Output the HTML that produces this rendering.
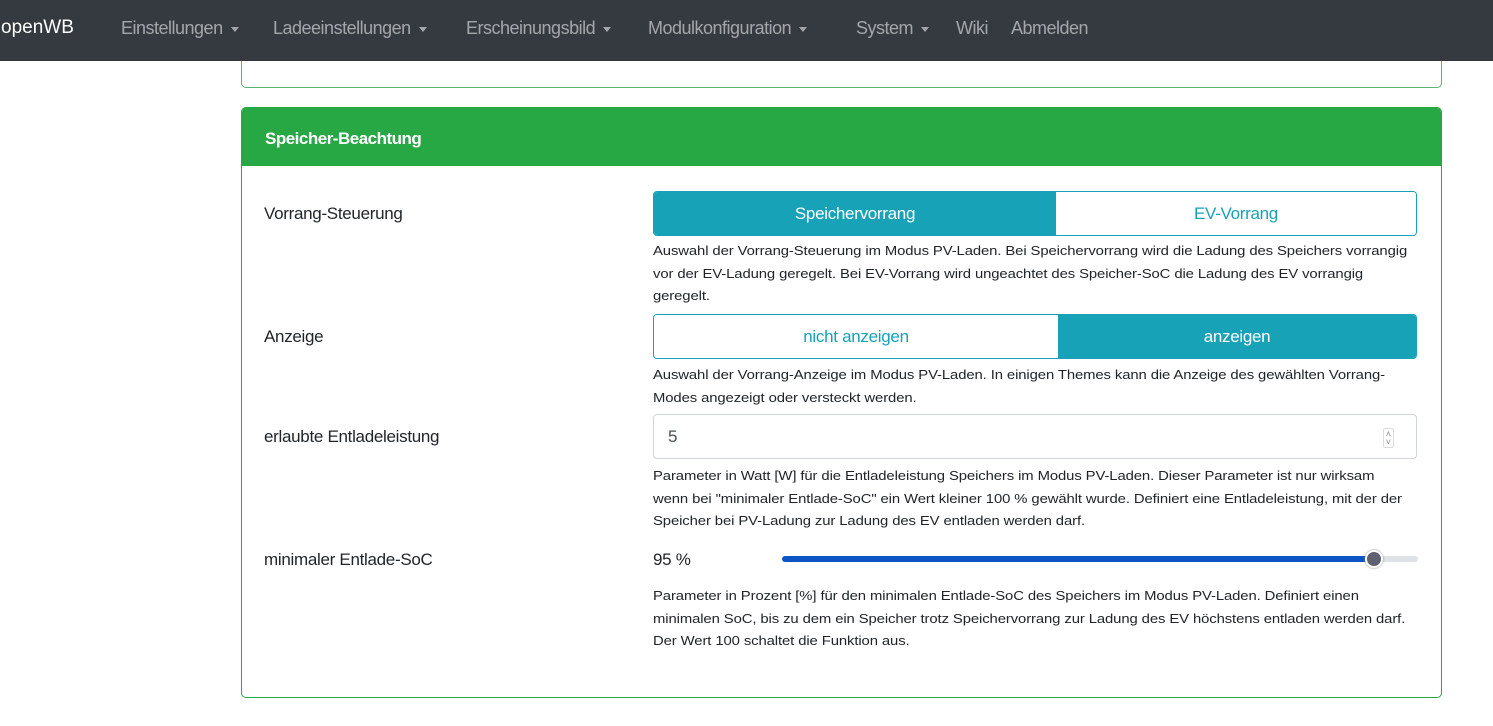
<!DOCTYPE html>
<html><head><meta charset="utf-8"><style>
*{margin:0;padding:0;box-sizing:border-box}
body{width:1493px;height:726px;background:#fff;font-family:"Liberation Sans",sans-serif;position:relative;overflow:hidden;color:#212529}
.nav{position:absolute;left:0;top:0;width:1493px;height:61px;background:#343a40;z-index:5}
.nav span{position:absolute;top:18px;font-size:18px;color:rgba(255,255,255,.55);letter-spacing:-0.5px;white-space:nowrap}
.nav .brand{color:#fff;font-size:19px;top:17px;letter-spacing:0}
.car{display:inline-block;width:0;height:0;border-left:4px solid transparent;border-right:4px solid transparent;border-top:5px solid rgba(255,255,255,.55);vertical-align:middle;margin-left:8px}
.card0{position:absolute;left:241px;top:40px;width:1201px;height:48px;border:1px solid #5cb270;border-top:none;border-radius:0 0 5px 5px}
.card{position:absolute;left:241px;top:107px;width:1201px;height:591px;border:1px solid #28a745;border-radius:5px;overflow:hidden}
.hdr{height:58px;background:#28a745;color:#fff;font-weight:bold;font-size:17px;padding:21px 0 0 23px;letter-spacing:-0.5px}
.lbl{position:absolute;left:264px;font-size:17px;letter-spacing:-0.3px;white-space:nowrap}
.help{position:absolute;left:653px;font-size:14.85px;line-height:25.6px;letter-spacing:-0.1px;white-space:nowrap;color:#212529;transform:scaleY(0.88);transform-origin:0 0}
.bg{position:absolute;left:653px;width:764px;height:45px;border:1px solid #17a2b8;border-radius:4px;display:flex;overflow:hidden}
.bg div{display:flex;align-items:center;justify-content:center;font-size:17px;letter-spacing:-0.3px}
.on{background:#17a2b8;color:#fff}.off{color:#17a2b8;background:#fff}
</style></head><body>
<div class="nav">
<span class="brand" style="left:1px">openWB</span>
<span style="left:121px">Einstellungen<i class="car"></i></span>
<span style="left:273px">Ladeeinstellungen<i class="car"></i></span>
<span style="left:466px">Erscheinungsbild<i class="car"></i></span>
<span style="left:648px">Modulkonfiguration<i class="car"></i></span>
<span style="left:856px">System<i class="car"></i></span>
<span style="left:956px">Wiki</span>
<span style="left:1011px">Abmelden</span>
</div>
<div class="card0"></div>
<div class="card"><div class="hdr">Speicher-Beachtung</div></div>
<div class="lbl" style="top:204px">Vorrang-Steuerung</div>
<div class="bg" style="top:191px"><div class="on" style="width:402px">Speichervorrang</div><div class="off" style="flex:1">EV-Vorrang</div></div>
<div class="help" style="top:241px">Auswahl der Vorrang-Steuerung im Modus PV-Laden. Bei Speichervorrang wird die Ladung des Speichers vorrangig<br>vor der EV-Ladung geregelt. Bei EV-Vorrang wird ungeachtet des Speicher-SoC die Ladung des EV vorrangig<br>geregelt.</div>
<div class="lbl" style="top:327px">Anzeige</div>
<div class="bg" style="top:314px"><div class="off" style="width:404px">nicht anzeigen</div><div class="on" style="flex:1">anzeigen</div></div>
<div class="help" style="top:365px">Auswahl der Vorrang-Anzeige im Modus PV-Laden. In einigen Themes kann die Anzeige des gewählten Vorrang-<br>Modes angezeigt oder versteckt werden.</div>
<div class="lbl" style="top:427px">erlaubte Entladeleistung</div>
<div style="position:absolute;left:653px;top:414px;width:764px;height:45px;border:1px solid #ced4da;border-radius:4px;font-size:17px;padding:12px 0 0 14px;color:#495057">5<span style="position:absolute;right:22px;top:13px;font-size:9px;line-height:8px;color:#888;border:1px solid #ddd;border-radius:2px;padding:1px 2px">˄<br>˅</span></div>
<div class="help" style="top:466px">Parameter in Watt [W] für die Entladeleistung Speichers im Modus PV-Laden. Dieser Parameter ist nur wirksam<br>wenn bei "minimaler Entlade-SoC" ein Wert kleiner 100 % gewählt wurde. Definiert eine Entladeleistung, mit der der<br>Speicher bei PV-Ladung zur Ladung des EV entladen werden darf.</div>
<div class="lbl" style="top:550px">minimaler Entlade-SoC</div>
<div style="position:absolute;left:653px;top:550px;font-size:17px;letter-spacing:-0.3px">95 %</div>
<div style="position:absolute;left:782px;top:556px;width:636px;height:6px;border-radius:3px;background:#dee2e6"></div>
<div style="position:absolute;left:782px;top:556px;width:592px;height:6px;border-radius:3px;background:#0b56c4"></div>
<div style="position:absolute;left:1365px;top:550px;width:18px;height:18px;border-radius:50%;background:#5f6170;border:2px solid #fff;box-shadow:0 0 2px #888"></div>
<div class="help" style="top:586px">Parameter in Prozent [%] für den minimalen Entlade-SoC des Speichers im Modus PV-Laden. Definiert einen<br>minimalen SoC, bis zu dem ein Speicher trotz Speichervorrang zur Ladung des EV höchstens entladen werden darf.<br>Der Wert 100 schaltet die Funktion aus.</div>
</body></html>
